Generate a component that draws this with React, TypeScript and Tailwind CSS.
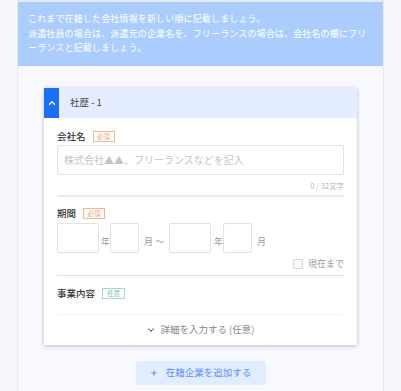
import { ChevronUp, ChevronDown, Plus } from "lucide-react";

const font = { fontFamily: '"Noto Sans CJK JP", "Noto Sans", sans-serif' };

function Badge({ kind }: { kind: "req" | "opt" }) {
  return kind === "req" ? (
    <span className="ml-[7px] inline-flex h-[11px] w-[22px] items-center justify-center border border-[#f7b392] text-[6.5px] leading-none text-[#f29b74]">
      必須
    </span>
  ) : (
    <span className="ml-[7px] inline-flex h-[11px] w-[23px] items-center justify-center border border-[#a6dcc7] text-[6.5px] leading-none text-[#6cc3a3]">
      任意
    </span>
  );
}

function Box({ w }: { w: string }) {
  return <div className={`${w} h-[30px] rounded-[2px] border border-[#e2e2e2] bg-white`} />;
}

export default function App() {
  return (
    <div className="min-h-[391px] w-[401px] bg-[#f6f8fd]" style={font}>
      <div className="mx-[17px] min-h-[391px] border-x border-t-2 border-[#e6eaf0] bg-[#f7f9fe]">
        <div className="bg-[#abcdfd] px-[10px] py-[10px] text-[9px] leading-[14.5px] tracking-[0.15px] text-white">
          <p className="whitespace-nowrap">これまで在籍した会社情報を新しい順に記載しましょう。</p>
          <p className="whitespace-nowrap">派遣社員の場合は、派遣元の企業名を、フリーランスの場合は、会社名の欄にフリ</p>
          <p className="whitespace-nowrap">ーランスと記載しましょう。</p>
        </div>

        <div className="mx-[26px] mt-[22px] bg-white shadow-[0_1px_4px_rgba(0,0,0,0.25)]">
          <div className="flex h-[30px] items-center bg-[#e3edfd]">
            <div className="flex h-[30px] w-[15px] items-center justify-center bg-[#1a6ff3]">
              <ChevronUp size={10} strokeWidth={3} className="text-white" />
            </div>
            <span className="ml-[11px] text-[9.5px] text-[#444]">社歴 - 1</span>
          </div>

          <div className="px-[13px] pt-[13px]">
            <div className="flex h-[12px] items-center">
              <span className="text-[9.5px] font-medium text-[#333]">会社名</span>
              <Badge kind="req" />
            </div>
            <div className="mt-[2px] flex h-[30px] items-center rounded-[2px] border border-[#e2e2e2] px-[6px]">
              <span className="text-[10px] text-[#c4c4c4]">株式会社▲▲、フリーランスなどを記入</span>
            </div>
            <div className="mt-[6px] flex h-[10px] items-center justify-end text-[7.5px] text-[#b5b5b5]">
              0 / 32文字
            </div>
            <div className="mt-[4px] h-[2px] bg-[#ececec]" />

            <div className="mt-[11px] flex h-[12px] items-center">
              <span className="text-[9.5px] font-medium text-[#333]">期間</span>
              <Badge kind="req" />
            </div>
            <div className="mt-[3px] flex items-end text-[9px] text-[#999]">
              <Box w="w-[42px]" />
              <span className="mb-[4px] ml-[2px]">年</span>
              <Box w="w-[29px]" />
              <span className="mb-[4px] ml-[5px]">月 ～</span>
              <div className="ml-[5px]">
                <Box w="w-[42px]" />
              </div>
              <span className="mb-[4px] ml-[3px]">年</span>
              <Box w="w-[29px]" />
              <span className="mb-[4px] ml-[5px]">月</span>
            </div>
            <div className="mt-[6px] flex h-[10px] items-center justify-end">
              <div className="h-[10px] w-[10px] rounded-[1px] border border-[#d4d4d4]" />
              <span className="ml-[5px] text-[9px] text-[#999]">現在まで</span>
            </div>
            <div className="mt-[6px] h-px bg-[#e2e2e2]" />

            <div className="mt-[12px] flex h-[12px] items-center">
              <span className="text-[9.5px] font-medium text-[#333]">事業内容</span>
              <Badge kind="opt" />
            </div>

            <div className="mt-[14px] flex h-[31px] items-start justify-center rounded-t-[4px] border-t border-[#f0f0f0] pt-[7px]">
              <ChevronDown size={10} strokeWidth={2.5} className="mt-[3px] text-[#555]" />
              <span className="ml-[4px] text-[9.5px] text-[#888]">詳細を入力する (任意)</span>
            </div>
          </div>
        </div>

        <div className="mt-[16px] flex justify-center">
          <div className="flex h-[24px] w-[130px] items-center justify-center rounded-[3px] bg-[#e1ecfd] text-[9.5px] text-[#5d8ff0]">
            <Plus size={8} strokeWidth={3} />
            <span className="ml-[8px]">在籍企業を追加する</span>
          </div>
        </div>
      </div>
    </div>
  );
}
